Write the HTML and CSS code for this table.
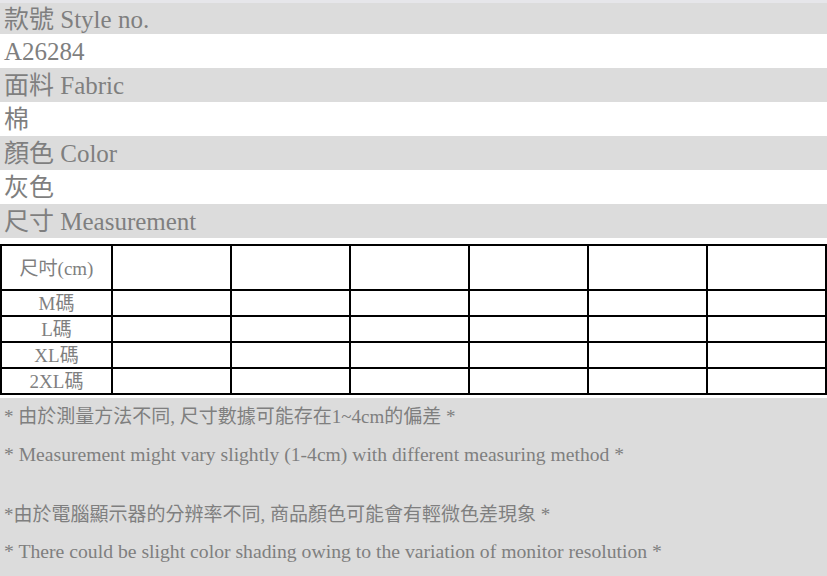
FILE: index.html
```html
<!DOCTYPE html>
<html lang="zh-Hant">
<head>
<meta charset="utf-8">
<link rel="stylesheet" href="styles.css">
</head>
<body>
<div class="spec">
  <div class="row shade first">款號 Style no.</div>
  <div class="row">A26284</div>
  <div class="row shade">面料 Fabric</div>
  <div class="row">棉</div>
  <div class="row shade">顏色 Color</div>
  <div class="row">灰色</div>
  <div class="row shade">尺寸 Measurement</div>
</div>
<table class="size">
  <colgroup>
    <col class="c-label">
    <col class="c-val"><col class="c-val"><col class="c-val"><col class="c-val"><col class="c-val"><col class="c-val">
  </colgroup>
  <tr class="head"><td class="label">尺吋(cm)</td><td></td><td></td><td></td><td></td><td></td><td></td></tr>
  <tr><td class="label">M碼</td><td></td><td></td><td></td><td></td><td></td><td></td></tr>
  <tr><td class="label">L碼</td><td></td><td></td><td></td><td></td><td></td><td></td></tr>
  <tr><td class="label">XL碼</td><td></td><td></td><td></td><td></td><td></td><td></td></tr>
  <tr><td class="label">2XL碼</td><td></td><td></td><td></td><td></td><td></td><td></td></tr>
</table>
<div class="notes">
  <p class="note n1">* 由於測量方法不同, 尺寸數據可能存在1~4cm的偏差 *</p>
  <p class="note n2">* Measurement might vary slightly (1-4cm) with different measuring method *</p>
  <p class="note n3">*由於電腦顯示器的分辨率不同, 商品顏色可能會有輕微色差現象 *</p>
  <p class="note n4">* There could be slight color shading owing to the variation of monitor resolution *</p>
</div>
</body>
</html>
```
FILE: styles.css
```css
html, body {
  margin: 0;
  padding: 0;
  background: #ffffff;
  width: 827px;
  height: 576px;
  overflow: hidden;
}
body {
  font-family: "Liberation Serif", "Noto Sans CJK TC", serif;
  color: #7f7f7f;
}
.spec {
  display: flex;
  flex-direction: column;
}
.row {
  height: 34px;
  line-height: 36px;
  font-size: 25px;
  padding-left: 4px;
  white-space: nowrap;
  background: #ffffff;
}
.row.shade {
  background: #dcdcdc;
}
.row.first {
  border-top: 3px solid #e6e6ea;
  height: 31px;
  line-height: 33px;
}
.size {
  margin-top: 6px;
  border-collapse: separate;
  border-spacing: 0;
  table-layout: fixed;
  width: 827px;
  border-top: 2px solid #000;
  border-left: 2px solid #000;
}
.size td {
  border-right: 2px solid #000;
  border-bottom: 2px solid #000;
  padding: 2px 0 0;
  height: 22px;
  font-size: 19px;
  line-height: 22px;
  text-align: center;
  background: #fff;
}
.size .head td {
  height: 41px;
}
.c-label { width: 111px; }
.c-val { width: 119px; }
.notes {
  margin-top: 3px;
  background: #dcdcdc;
  height: 178px;
  padding-top: 8px;
  box-sizing: border-box;
}
.note {
  margin: 0;
  padding-left: 4px;
  font-size: 19px;
  line-height: 22px;
  white-space: nowrap;
}
.n2 { margin-top: 16px; font-size: 19.6px; }
.n3 { margin-top: 38px; }
.n4 { margin-top: 14px; font-size: 19.7px; }
```
